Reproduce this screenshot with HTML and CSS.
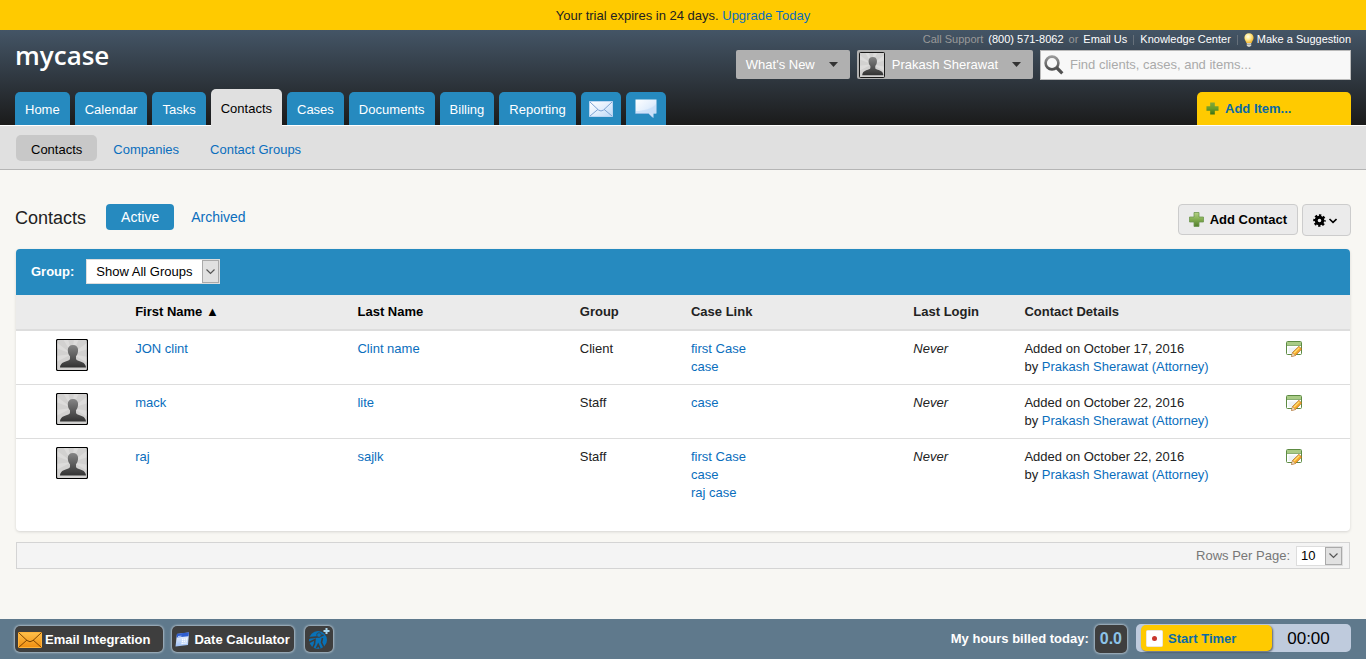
FILE: index.html
```html
<!DOCTYPE html>
<html lang="en">
<head>
<meta charset="utf-8">
<meta name="viewport" content="width=device-width, initial-scale=1">
<title>Contacts - mycase</title>
<link rel="stylesheet" href="styles.css">
</head>
<body class="page">
<svg class="defs" width="0" height="0" aria-hidden="true">
  <defs>
    <linearGradient id="g-bust" x1="0" y1="0" x2="0" y2="1"><stop offset="0" stop-color="#858585"/><stop offset="1" stop-color="#333"/></linearGradient>
    <linearGradient id="g-plus" x1="0" y1="0" x2="0" y2="1"><stop offset="0" stop-color="#b5d184"/><stop offset=".5" stop-color="#82ad50"/><stop offset="1" stop-color="#527d2c"/></linearGradient>
    <linearGradient id="g-plus-dark" x1="0" y1="0" x2="0" y2="1"><stop offset="0" stop-color="#86a83a"/><stop offset=".5" stop-color="#6b9d28"/><stop offset="1" stop-color="#3d6f13"/></linearGradient>
    <linearGradient id="g-ice" x1="0" y1="0" x2="1" y2="1"><stop offset="0" stop-color="#fff"/><stop offset=".5" stop-color="#e3effd"/><stop offset="1" stop-color="#bcd8f6"/></linearGradient>
    <linearGradient id="g-orange" x1="0" y1="0" x2="0" y2="1"><stop offset="0" stop-color="#ffc04a"/><stop offset="1" stop-color="#f18e10"/></linearGradient>
    <linearGradient id="g-cal" x1="0" y1="0" x2="0" y2="1"><stop offset="0" stop-color="#fff"/><stop offset="1" stop-color="#9fc0f5"/></linearGradient>
    <radialGradient id="g-bulb" cx=".4" cy=".35" r=".65"><stop offset="0" stop-color="#fffef0"/><stop offset=".5" stop-color="#ffe98a"/><stop offset="1" stop-color="#f2b632"/></radialGradient>
    <linearGradient id="g-lens" x1="0" y1="0" x2="0" y2="1"><stop offset="0" stop-color="#999"/><stop offset="1" stop-color="#505050"/></linearGradient>
  </defs>
  <symbol id="bust" viewBox="0 0 32 32">
    <rect width="32" height="32" rx="1.500" fill="#d2d1d0"/>
    <path d="M16 15 0 3v6zM16 15 7 0h5zM16 15 18 0h5zM16 15 32 3v7zM16 15 0 17v6zM16 15 32 18v6z" fill="#dddcdb"/>
    <path d="M17 6c-3.400 0-5.200 2-5.200 5 0 2.600.7 4.800 2.200 6.200v2.300c0 1.200-1 1.700-3 2.400-3.700 1.200-6.600 2.200-7 6.600h26c-.4-4.400-3.300-5.400-7-6.600-2-.7-3-1.200-3-2.400v-2.300c1.400-1.400 2.100-3.600 2.100-6.200 0-3-1.800-5-5.100-5z" fill="url(#g-bust)"/>
    <rect x=".5" y=".5" width="31" height="31" rx="1.500" fill="none" stroke="#000" stroke-width="1.200"/>
  </symbol>
  <symbol id="chevron" viewBox="0 0 9 7"><path d="M.5 1.500l4 4 4-4" fill="none" stroke="#555" stroke-width="1.200"/></symbol>
  <symbol id="edit" viewBox="0 0 16 16">
    <rect x=".5" y=".5" width="15" height="13" rx="1" fill="#fff" stroke="#5d8b43"/>
    <path d="M1 1h14v3H1z" fill="#a9cb86"/><path d="M1 4.500h14" stroke="#6c9b50" stroke-width=".8"/>
    <path d="M2.500 6.500h9v5.500h-9z" fill="#edf3f5"/>
    <path d="m5.500 15.500 1-4 6.500-6.200 2.700 2.800-6.200 6.400z" fill="#f5a82b" stroke="#a96522" stroke-width=".7"/>
    <path d="m8 12 5.400-5.400" stroke="#ffe174" stroke-width="1.300"/><path d="m5.500 15.500 1-3.700 2.700 2.600z" fill="#f3dcc1" stroke="#b28a61" stroke-width=".4"/>
  </symbol>
</svg>

<div class="trial">Your trial expires in 24 days. <a href="#upgrade">Upgrade Today</a></div>

<header class="header">
  <div class="header-top">
    <a class="logo" href="#home">mycase</a>
    <div class="header-right">
      <div class="support">
        <span class="dim">Call Support</span><span>(800) 571-8062</span><span class="dim">or</span><a href="#email">Email Us</a><span class="bar"></span><a href="#knowledge">Knowledge Center</a><span class="bar"></span>
        <a class="suggest" href="#suggest"><svg width="10" height="14" viewBox="0 0 10 14"><path d="M5 .3C2.200.3.400 2.200.4 4.700c0 2.200 1.600 3.200 2 5.300h5.200c.4-2.100 2-3.100 2-5.300C9.600 2.200 7.800.3 5 .3z" fill="url(#g-bulb)"/><path d="M2.800 10h4.400v2.400L6 13.700H4l-1.200-1.300z" fill="#d8d8cf"/><path d="M3 11.300h4" stroke="#85857c" stroke-width=".7"/></svg>Make a Suggestion</a>
      </div>
      <div class="tools">
        <button class="drop" type="button">What's New<svg width="9" height="5" viewBox="0 0 9 5"><path d="M0 0h9L4.500 5z" fill="#333"/></svg></button>
        <button class="drop user" type="button"><svg class="face" width="26" height="26"><use href="#bust"/></svg>Prakash Sherawat<svg width="9" height="5" viewBox="0 0 9 5"><path d="M0 0h9L4.500 5z" fill="#333"/></svg></button>
        <form class="search" role="search">
          <svg width="20" height="20" viewBox="0 0 20 20"><circle cx="8" cy="8" r="6.400" fill="none" stroke="url(#g-lens)" stroke-width="2.600"/><path d="m12.500 12.500 5.800 5.800" stroke="#505050" stroke-width="3.200"/></svg>
          <input type="text" aria-label="Search" placeholder="Find clients, cases, and items...">
        </form>
      </div>
    </div>
  </div>
  <div class="header-nav">
    <nav class="tabs" aria-label="Main">
      <a class="tab" href="#home">Home</a>
      <a class="tab" href="#calendar">Calendar</a>
      <a class="tab" href="#tasks">Tasks</a>
      <a class="tab tab-active" href="#contacts">Contacts</a>
      <a class="tab" href="#cases">Cases</a>
      <a class="tab" href="#documents">Documents</a>
      <a class="tab" href="#billing">Billing</a>
      <a class="tab" href="#reporting">Reporting</a>
      <a class="tab tab-icon" href="#messages" aria-label="Messages"><svg width="24" height="16" viewBox="0 0 24 16"><path d="M.5.500h23v15H.5z" fill="url(#g-ice)" stroke="#b9d5f2"/><path d="m1 1 8.500 8q2.500 2 5 0L23 1M1 15l8-6.700M23 15l-8-6.700" fill="none" stroke="#7ea4d4" stroke-width="1"/></svg></a>
      <a class="tab tab-icon" href="#comments" aria-label="Comments"><svg width="22" height="20" viewBox="0 0 22 20"><path d="M.5.500h21v14h-3V19l-5-4.500H.5z" fill="url(#g-ice)"/><path d="M1 12C8 12 17 10 21 5v9.500H1z" fill="#c5ddf8" opacity=".7"/><path d="M.5 14.500h13l4 4" fill="none" stroke="#8db5e2" stroke-width=".8"/></svg></a>
    </nav>
    <button class="add-item" type="button"><svg width="13" height="13" viewBox="0 0 14 14"><path d="M4.500.5h5v4h4v5h-4v4h-5v-4h-4v-5h4z" fill="url(#g-plus-dark)"/></svg>Add Item...</button>
  </div>
</header>

<nav class="subnav" aria-label="Contacts sections">
  <a class="subtab subtab-active" href="#contacts">Contacts</a>
  <a class="subtab" href="#companies">Companies</a>
  <a class="subtab" href="#groups">Contact Groups</a>
</nav>

<main class="main">
  <div class="title-row">
    <h1 class="title">Contacts</h1>
    <a class="pill pill-active" href="#active">Active</a>
    <a class="pill" href="#archived">Archived</a>
    <div class="actions">
      <button class="btn" type="button"><svg width="15" height="15" viewBox="0 0 15 15"><path d="M5 .5h5V5h4.500v5H10v4.500H5V10H.5V5H5z" fill="url(#g-plus)" stroke="#6f9850" stroke-width=".8"/></svg>Add Contact</button>
      <button class="btn btn-gear" type="button" aria-label="Settings"><svg width="24" height="13" viewBox="0 0 24 13"><circle cx="6.500" cy="6.500" r="3.300" fill="none" stroke="#000" stroke-width="3"/><circle cx="6.500" cy="6.500" r="5.200" fill="none" stroke="#000" stroke-width="2.200" stroke-dasharray="2.300 1.784" stroke-dashoffset="1.150"/><path d="m16.500 5 3.500 3.300L23.500 5" fill="none" stroke="#000" stroke-width="1.600"/></svg></button>
    </div>
  </div>

  <section class="card">
    <div class="filter">
      <label for="group">Group:</label>
      <span class="select select-group">
        <select id="group"><option>Show All Groups</option></select>
        <span class="select-arrow"><svg width="9" height="7"><use href="#chevron"/></svg></span>
      </span>
    </div>
    <table class="contacts">
      <thead>
        <tr><td class="c1"></td><th class="c2 sorted">First Name ▲</th><th class="c2 sorted">Last Name</th><th class="c1">Group</th><th class="c2">Case Link</th><th class="c1">Last Login</th><th class="c2">Contact Details</th><td class="c1"></td></tr>
      </thead>
      <tbody>
        <tr>
          <td class="icon-cell"><svg width="32" height="32"><use href="#bust"/></svg></td>
          <td><a href="#jon">JON clint</a></td><td><a href="#jon">Clint name</a></td><td>Client</td>
          <td><a href="#c1">first Case</a><br><a href="#c2">case</a></td><td><em>Never</em></td>
          <td>Added on October 17, 2016<br>by <a href="#prakash">Prakash Sherawat (Attorney)</a></td>
          <td class="icon-cell edit-cell"><a href="#edit1" aria-label="Edit JON clint"><svg width="16" height="16"><use href="#edit"/></svg></a></td>
        </tr>
        <tr>
          <td class="icon-cell"><svg width="32" height="32"><use href="#bust"/></svg></td>
          <td><a href="#mack">mack</a></td><td><a href="#mack">lite</a></td><td>Staff</td>
          <td><a href="#c2">case</a></td><td><em>Never</em></td>
          <td>Added on October 22, 2016<br>by <a href="#prakash">Prakash Sherawat (Attorney)</a></td>
          <td class="icon-cell edit-cell"><a href="#edit2" aria-label="Edit mack lite"><svg width="16" height="16"><use href="#edit"/></svg></a></td>
        </tr>
        <tr>
          <td class="icon-cell"><svg width="32" height="32"><use href="#bust"/></svg></td>
          <td><a href="#raj">raj</a></td><td><a href="#raj">sajlk</a></td><td>Staff</td>
          <td><a href="#c1">first Case</a><br><a href="#c2">case</a><br><a href="#c3">raj case</a></td><td><em>Never</em></td>
          <td>Added on October 22, 2016<br>by <a href="#prakash">Prakash Sherawat (Attorney)</a></td>
          <td class="icon-cell edit-cell"><a href="#edit3" aria-label="Edit raj sajlk"><svg width="16" height="16"><use href="#edit"/></svg></a></td>
        </tr>
      </tbody>
    </table>
  </section>

  <div class="pager">
    <label for="rows">Rows Per Page:</label>
    <span class="select select-rows">
      <select id="rows"><option>10</option></select>
      <span class="select-arrow"><svg width="9" height="7"><use href="#chevron"/></svg></span>
    </span>
  </div>
</main>

<footer class="footer">
  <button class="dark-btn" type="button"><svg width="24" height="16" viewBox="0 0 24 16"><path d="M.5.500h23v15H.5z" fill="url(#g-orange)" stroke="#ffb43c"/><path d="m.5.500 8.500 8q3 2.500 6 0l8.500-8M.5 15.500 9 8M23.500 15.500 15 8" fill="none" stroke="#7e4300" stroke-width="1"/></svg>Email Integration</button>
  <button class="dark-btn dark-date" type="button"><svg width="15" height="15" viewBox="0 0 15 15"><path d="M2 2 14 .5 13 13 .5 14.500z" fill="url(#g-cal)"/><path d="M2 1.700 14 .3l-.4 4L1.500 5.500z" fill="#2f5ed0"/><path d="m3 4.500 3.500-.4" stroke="#b9cffa"/><path d="M7 7.500 12 7M6.800 9.500l5-.5M6.500 11.500l5-.5" stroke="#fff" stroke-width="1.300" stroke-dasharray="1.300 .6"/></svg>Date Calculator</button>
  <button class="dark-btn dark-square" type="button" aria-label="Add person"><svg width="22" height="22" viewBox="0 0 22 22"><circle cx="10" cy="12" r="9" fill="#0872b8"/><path d="M0 10.500c4-2.500 8 .5 15.500-3.500M1 14.500l6-3-.5 4.500-2.500 5M14.500 10l-1 4.500 2.500 5M8.500 20l1.700-3.500 1.800 4" fill="none" stroke="#3e3e3e" stroke-width="1.600"/><circle cx="11" cy="7" r="2.300" fill="#0872b8" stroke="#3e3e3e" stroke-width=".8"/><path d="M18.500 0v6M15.500 3h6" stroke="#3e3e3e" stroke-width="4"/><path d="M18.500 0v6M15.500 3h6" stroke="#acd8f0" stroke-width="2"/></svg></button>
  <div class="billed"><span>My hours billed today:</span><span class="hours">0.0</span></div>
  <div class="timer">
    <button class="start" type="button"><svg width="17" height="17" viewBox="0 0 17 17"><rect x=".5" y=".5" width="16" height="16" rx="1" fill="#fff" stroke="#ece7dd"/><circle cx="8.500" cy="8.500" r="2.500" fill="#c8372d"/></svg>Start Timer</button>
    <span class="clock">00:00</span>
  </div>
</footer>
</body>
</html>
```

FILE: styles.css
```css
*, *::before, *::after { box-sizing: border-box; }

.page {
  margin: 0;
  min-height: 100vh;
  display: flex;
  flex-direction: column;
  background: #f8f7f3;
  color: #222;
  font: 13px/18px "Liberation Sans", Arial, sans-serif;
}

.page a { color: #0a6ebd; text-decoration: none; }
.page svg { display: block; flex: none; }
.page button, .page input, .page select { font: inherit; }
.page button { cursor: pointer; white-space: nowrap; }
.page .defs { position: absolute; }

.trial { padding: 7px 15px 5px; background: #ffca00; text-align: center; }

/* Header */
.header {
  padding: 3px 15px 0;
  background: linear-gradient(#445566, #1b1b1b);
  border-bottom: 1px solid #fff;
}
.header-top { display: flex; justify-content: space-between; }
.page .logo { padding-top: 4px; color: #fff; font: 600 26px/36px "Open Sans", "Noto Sans", sans-serif; }
.support {
  display: flex;
  justify-content: flex-end;
  align-items: center;
  gap: 5px;
  height: 13px;
  font-size: 11px;
  line-height: 13px;
  color: #fff;
}
.page .support a { color: #fff; }
.dim { color: #999; }
.bar { width: 1px; height: 10px; margin: 0 1px; background: #66707a; }
.suggest { display: flex; align-items: center; gap: 3px; }
.tools { display: flex; justify-content: flex-end; gap: 7px; margin-top: 4px; }
.drop {
  display: flex;
  align-items: center;
  gap: 14px;
  height: 29px;
  padding: 0 12px 0 10px;
  border: 0;
  border-radius: 2px;
  background: #b0b0b0;
  color: #fff;
}
.user { padding-left: 2px; }
.face { margin-right: -7px; }
.search {
  display: flex;
  align-items: center;
  gap: 6px;
  width: 311px;
  height: 30px;
  padding: 0 3px;
  border: 1px solid #bbb;
  background: #f8f8f8;
}
.search input { flex: 1; min-width: 0; padding: 0; border: 0; background: none; outline: 0; color: #333; }
.search input::placeholder { color: #aaa; opacity: 1; }

.header-nav { display: flex; justify-content: space-between; align-items: flex-end; margin-top: 9px; }
.tabs { display: flex; align-items: flex-end; gap: 5px; }
.page .tab {
  display: flex;
  align-items: center;
  height: 33px;
  padding: 3px 10px 0;
  border-radius: 5px 5px 0 0;
  background: #268abf;
  color: #fff;
}
.page .tab-active { height: 37px; margin-bottom: -1px; background: #e0e0e0; color: #000; }
.page .tab-icon { width: 40px; padding: 0; justify-content: center; }
.add-item {
  display: flex;
  align-items: center;
  gap: 6px;
  width: 154px;
  height: 33px;
  padding: 0 9px;
  border: 0;
  border-radius: 5px 5px 0 0;
  background: #ffca00;
  color: #0a6aa6;
}
.page .add-item { font-weight: bold; }

.subnav {
  display: flex;
  gap: 1px;
  padding: 9px 16px 8px;
  background: #e0e0e0;
  border-bottom: 1px solid #b5b5b5;
}
.subtab { padding: 6px 15px 2px; border-radius: 5px; }
.page .subtab-active { background: #c8c8c8; color: #000; }

/* Content */
.main { padding: 34px 16px 24px; }
.title-row { display: flex; align-items: flex-start; gap: 2px; margin-bottom: 13px; }
.title { margin: 0 18px 0 -1px; font-size: 18px; line-height: 28px; font-weight: normal; }
.pill { padding: 4px 15px; border-radius: 4px; font-size: 14px; }
.page .pill-active { background: #268abf; color: #fff; }
.actions { display: flex; gap: 4px; margin: 0 -1px 0 auto; }
.btn {
  display: flex;
  align-items: center;
  gap: 6px;
  height: 31px;
  padding: 0 10px;
  border: 1px solid #ccc;
  border-radius: 4px;
  background: #ebebeb;
  color: #000;
}
.page .btn { font-weight: bold; }
.btn-gear { width: 49px; height: 32px; }

.card {
  padding-bottom: 21px;
  border-radius: 4px;
  overflow: hidden;
  background: #fff;
  box-shadow: 0 1px 3px rgba(0, 0, 0, .14);
}
.filter {
  display: flex;
  align-items: center;
  gap: 12px;
  height: 46px;
  padding: 0 15px 1px;
  background: #268abf;
  color: #fff;
  font-weight: bold;
}
.select { position: relative; display: block; color: #000; font-weight: normal; }
.select select {
  display: block;
  width: 100%;
  height: 25px;
  padding: 0 9px;
  border: 1px solid #ddd;
  border-radius: 0;
  background: #fff;
  color: #000;
  appearance: none;
}
.select-group { width: 134px; }
.select-rows { width: 47px; }
.select-rows select { height: 20px; padding: 0 4px; }
.select-arrow {
  position: absolute;
  top: 1px;
  right: 1px;
  bottom: 1px;
  width: 17px;
  display: flex;
  align-items: center;
  justify-content: center;
  border: 1px solid #aaa;
  background: #e1e1e1;
  pointer-events: none;
}

.contacts { width: 100%; table-layout: fixed; border-collapse: separate; border-spacing: 0; }
.c1 { width: 8.333%; }
.c2 { width: 16.666%; }
.contacts td { padding: 9px 8px 8px; border-bottom: 1px solid #ddd; vertical-align: top; }
.contacts thead th, .contacts thead td {
  height: 36px;
  padding: 0 8px;
  background: #ebebeb;
  border-bottom: 2px solid #ddd;
  text-align: left;
}
.contacts .sorted { color: #000; }
.contacts tbody tr:last-child td { border-bottom: 0; }
.contacts .icon-cell { padding-top: 8px; }
.contacts .edit-cell { padding-top: 10px; }
.icon-cell svg { margin: 0 auto; }

.pager {
  display: flex;
  align-items: center;
  justify-content: flex-end;
  gap: 6px;
  height: 27px;
  margin-top: 11px;
  padding: 0 6px;
  border: 1px solid #d4d4d4;
  background: #f4f4f4;
  color: #777;
}

/* Bottom bar */
.footer {
  display: flex;
  align-items: center;
  gap: 9px;
  height: 40px;
  margin-top: auto;
  padding: 0 15px;
  background: #5f798c;
  color: #fff;
  font-weight: bold;
}
.dark-btn {
  display: flex;
  align-items: center;
  gap: 3px;
  height: 26px;
  padding: 1px 13px 0 3px;
  border: 0;
  border-radius: 5px;
  background: #3e3e3e;
  color: #fff;
  box-shadow: 0 0 2px 1px #a9b8c3;
}
.page .dark-btn { font-weight: bold; }
.dark-date { gap: 4px; padding: 1px 4px 0 3px; }
.dark-square { margin-left: 2px; padding: 0 3px; }
.billed { display: flex; align-items: center; gap: 6px; margin-left: auto; }
.hours {
  padding: 5px;
  border-radius: 5px;
  background: #3e3e3e;
  color: #8cc3e8;
  font-size: 16px;
  box-shadow: 0 0 2px 1px #a9b8c3;
}
.timer { display: flex; width: 215px; height: 28px; margin-bottom: 2px; padding-left: 5px; border-radius: 5px; background: #bfcbdd; }
.start {
  display: flex;
  align-items: center;
  gap: 5px;
  width: 131px;
  height: 26px;
  margin-top: 1px;
  padding: 1px 5px 0;
  border: 0;
  border-radius: 5px;
  background: #ffca00;
  color: #0a6aa6;
  box-shadow: 1px 1px 2px rgba(0, 0, 0, .5);
}
.page .start { font-weight: bold; }
.clock { flex: 1; padding-right: 6px; color: #000; font-size: 17px; font-weight: normal; line-height: 30px; text-align: center; }
```
